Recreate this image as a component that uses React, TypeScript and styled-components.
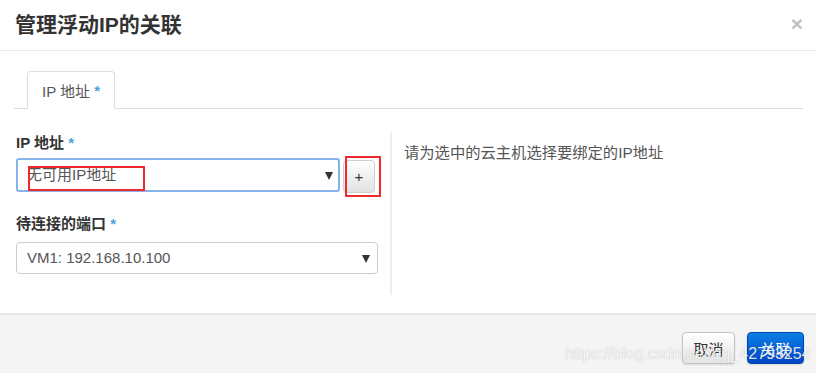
import React from "react";
import styled, { createGlobalStyle } from "styled-components";

const GlobalStyle = createGlobalStyle`
  html, body {
    margin: 0;
    padding: 0;
    background: #ffffff;
  }
  body {
    width: 816px;
    height: 373px;
    overflow: hidden;
    font-family: "Liberation Sans", "Noto Sans CJK SC", Arial, sans-serif;
    color: #333333;
  }
  * { box-sizing: border-box; }
`;

const Modal = styled.div`
  width: 816px;
  height: 373px;
  display: flex;
  flex-direction: column;
  background: #ffffff;
`;

const Header = styled.div`
  height: 51px;
  flex: none;
  display: flex;
  align-items: center;
  justify-content: space-between;
  padding: 0 13px 0 15px;
  border-bottom: 1px solid #e8e8e8;
`;

const Title = styled.h4`
  margin: 0;
  font-family: "Liberation Sans", "Noto Sans CJK SC", sans-serif;
  font-size: 21px;
  font-weight: 700;
  line-height: 24px;
  color: #333333;
`;

const Close = styled.span`
  font-family: "Liberation Sans", sans-serif;
  font-size: 21px;
  font-weight: 700;
  line-height: 1;
  color: #000000;
  opacity: 0.25;
  margin-top: -3px;
`;

const Body = styled.div`
  flex: 1;
  padding: 20px 13px 0 14px;
`;

const TabNav = styled.div`
  display: flex;
  height: 38px;
  padding-left: 13px;
  border-bottom: 1px solid #dddddd;
`;

const Tab = styled.div`
  height: 38px;
  padding: 0 14px;
  display: flex;
  align-items: center;
  border: 1px solid #dddddd;
  border-bottom-color: transparent;
  border-radius: 4px 4px 0 0;
  background: #ffffff;
  font-size: 15px;
  color: #555555;
  white-space: pre;
`;

const Req = styled.span`
  color: #4aa6da;
  font-weight: 700;
`;

const Row = styled.div`
  display: flex;
  margin-top: 23px;
`;

const LeftCol = styled.div`
  width: 378px;
  height: 163px;
  padding: 1px 12px 0 2px;
  border-right: 2px solid #eeeeee;
`;

const Group = styled.div<{ $gap: number }>`
  margin-bottom: ${(p) => p.$gap}px;
`;

const Label = styled.div<{ $gap: number }>`
  font-size: 15px;
  font-weight: 700;
  line-height: 20px;
  color: #333333;
  margin-bottom: ${(p) => p.$gap}px;
  white-space: pre;
`;

const InputLine = styled.div`
  display: flex;
  align-items: flex-start;
`;

const Select = styled.div<{ $focused?: boolean; $width: number }>`
  width: ${(p) => p.$width}px;
  height: ${(p) => (p.$focused ? 34 : 32)}px;
  display: flex;
  align-items: center;
  justify-content: space-between;
  padding: 0 ${(p) => (p.$focused ? 5 : 7)}px 0 ${(p) => (p.$focused ? 9 : 10)}px;
  border: ${(p) => (p.$focused ? "2px solid #86b3ec" : "1px solid #cccccc")};
  border-radius: ${(p) => (p.$focused ? 3 : 4)}px;
  background: #ffffff;
  font-size: 15px;
  color: #555555;
`;

const SelectText = styled.span`
  line-height: 20px;
  white-space: nowrap;
`;

const Annotated = styled.span`
  position: relative;
  display: inline-block;
  &::after {
    content: "";
    position: absolute;
    left: 1px;
    top: 1px;
    width: 113px;
    height: 21px;
    border: 2px solid #ee2a2f;
  }
`;

const Caret = styled.span`
  width: 0;
  height: 0;
  border-left: 4px solid transparent;
  border-right: 4px solid transparent;
  border-top: 8px solid #333333;
  margin-top: 1px;
`;

const AddWrap = styled.div`
  position: relative;
  margin-left: 3px;
  margin-top: 2px;
  &::after {
    content: "";
    position: absolute;
    left: 2px;
    top: -4px;
    width: 32px;
    height: 37px;
    border: 2px solid #ee2a2f;
    pointer-events: none;
  }
`;

const AddButton = styled.button`
  width: 32px;
  height: 33px;
  padding: 0;
  display: flex;
  align-items: center;
  justify-content: center;
  border: 1px solid #cfcfcf;
  border-radius: 4px;
  background: linear-gradient(#ffffff, #e2e2e2);
  font-family: "Liberation Sans", sans-serif;
  font-size: 15px;
  color: #333333;
`;

const RightCol = styled.div`
  flex: 1;
  padding-left: 12px;
`;

const Help = styled.p`
  margin: 11px 0 0;
  font-size: 15.3px;
  line-height: 20px;
  color: #555555;
`;

const Footer = styled.div`
  position: relative;
  height: 60px;
  flex: none;
  display: flex;
  justify-content: flex-end;
  align-items: flex-start;
  gap: 12px;
  padding: 17px 12px 0 0;
  background: #f4f4f4;
  border-top: 2px solid #e6e6e6;
`;

const Button = styled.button<{ $primary?: boolean; $width: number }>`
  width: ${(p) => p.$width}px;
  height: 32px;
  padding: 0;
  border-radius: 4px;
  font-family: "Liberation Sans", "Noto Sans CJK SC", sans-serif;
  font-size: 15px;
  border: 1px solid ${(p) => (p.$primary ? "#0446b0" : "#c4c4c4")};
  color: ${(p) => (p.$primary ? "#ffffff" : "#333333")};
  background: ${(p) =>
    p.$primary
      ? "linear-gradient(#0d7fe6, #0046c4)"
      : "linear-gradient(#ffffff, #e4e4e4)"};
  box-shadow: 0 1px 2px rgba(0, 0, 0, 0.12);
`;

const Watermark = styled.span`
  position: absolute;
  left: 565px;
  top: 29px;
  font-family: "Liberation Sans", sans-serif;
  font-size: 16px;
  line-height: 20px;
  color: rgba(255, 255, 255, 0.9);
  text-shadow: 0 0 1px rgba(0, 0, 0, 0.3);
  white-space: nowrap;
  pointer-events: none;
`;

export default function App() {
  return (
    <>
      <GlobalStyle />
      <Modal>
        <Header>
          <Title>管理浮动IP的关联</Title>
          <Close>×</Close>
        </Header>
        <Body>
          <TabNav>
            <Tab>
              IP 地址 <Req>*</Req>
            </Tab>
          </TabNav>
          <Row>
            <LeftCol>
              <Group $gap={21}>
                <Label $gap={5}>
                  IP 地址 <Req>*</Req>
                </Label>
                <InputLine>
                  <Select $focused $width={324}>
                    <SelectText>
                      <Annotated>无可用IP地址</Annotated>
                    </SelectText>
                    <Caret />
                  </Select>
                  <AddWrap>
                    <AddButton>+</AddButton>
                  </AddWrap>
                </InputLine>
              </Group>
              <Group $gap={0}>
                <Label $gap={8}>
                  待连接的端口 <Req>*</Req>
                </Label>
                <Select $width={362}>
                  <SelectText>VM1: 192.168.10.100</SelectText>
                  <Caret />
                </Select>
              </Group>
            </LeftCol>
            <RightCol>
              <Help>请为选中的云主机选择要绑定的IP地址</Help>
            </RightCol>
          </Row>
        </Body>
        <Footer>
          <Button $width={53}>取消</Button>
          <Button $primary $width={57}>关联</Button>
          <Watermark>https://blog.csdn.net/qq_42793254</Watermark>
        </Footer>
      </Modal>
    </>
  );
}
